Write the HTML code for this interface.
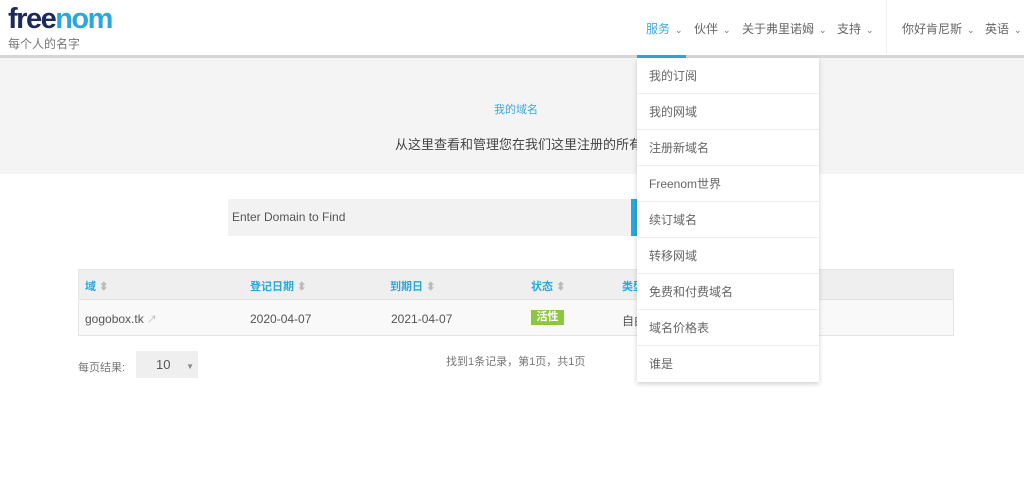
<!DOCTYPE html>
<html><head><meta charset="utf-8"><style>
*{margin:0;padding:0;box-sizing:border-box}
body{width:1024px;height:492px;background:#fff;font-family:"Liberation Sans","Noto Sans CJK SC",sans-serif;position:relative;overflow:hidden;color:#555}
.a{position:absolute}
.nav{font-size:12px;color:#666;top:20px}
.car{font-size:9px;color:#777;margin-left:5px}
.dd div{height:36px;line-height:36px;padding-left:12px;font-size:12px;color:#666;border-bottom:1px solid #eee}
th,td{text-align:left}
</style></head><body>
<div class="a" style="left:8px;top:4px;font-size:29px;font-weight:bold;letter-spacing:-1.5px;line-height:30px"><span style="color:#1e2a5a">free</span><span style="color:#29a8e0">nom</span></div>
<div class="a" style="left:8px;top:35px;font-size:12px;color:#777">每个人的名字</div>
<div class="a nav" style="left:646px;color:#3aa8dc">服务<span class="car">⌄</span></div>
<div class="a nav" style="left:694px">伙伴<span class="car">⌄</span></div>
<div class="a nav" style="left:742px">关于弗里诺姆<span class="car">⌄</span></div>
<div class="a nav" style="left:837px">支持<span class="car">⌄</span></div>
<div class="a" style="left:886px;top:0;width:1px;height:55px;background:#eee"></div>
<div class="a nav" style="left:902px">你好肯尼斯<span class="car">⌄</span></div>
<div class="a nav" style="left:985px">英语<span class="car">⌄</span></div>
<div class="a" style="left:0;top:55px;width:1024px;height:3px;background:#d6d6d6"></div>
<div class="a" style="left:637px;top:55px;width:49px;height:3px;background:#29a8e0"></div>
<div class="a" style="left:0;top:58px;width:1024px;height:116px;background:#f4f4f4"></div>
<div class="a" style="left:494px;top:101px;font-size:11px;color:#3aa8dc">我的域名</div>
<div class="a" style="left:395px;top:134px;font-size:13px;color:#444">从这里查看和管理您在我们这里注册的所有域名...</div>
<div class="a" style="left:228px;top:199px;width:404px;height:37px;background:#f2f2f2;font-size:12px;color:#555;line-height:37px;padding-left:4px">Enter Domain to Find</div>
<div class="a" style="left:631px;top:199px;width:6px;height:37px;background:#29a8e0"></div>
<div class="a" style="left:78px;top:269px;width:876px;height:67px;border:1px solid #e5e5e5;background:#f9f9f9"></div>
<div class="a" style="left:79px;top:270px;width:874px;height:30px;background:#efefef;border-bottom:1px solid #e3e3e3"></div>
<div class="a" style="top:278px;left:85px;font-size:11px;font-weight:bold;color:#29a8e0">域 <span style="color:#bbb">⬍</span></div>
<div class="a" style="top:278px;left:250px;font-size:11px;font-weight:bold;color:#29a8e0">登记日期 <span style="color:#bbb">⬍</span></div>
<div class="a" style="top:278px;left:390px;font-size:11px;font-weight:bold;color:#29a8e0">到期日 <span style="color:#bbb">⬍</span></div>
<div class="a" style="top:278px;left:531px;font-size:11px;font-weight:bold;color:#29a8e0">状态 <span style="color:#bbb">⬍</span></div>
<div class="a" style="top:278px;left:622px;font-size:11px;font-weight:bold;color:#29a8e0">类型</div>
<div class="a" style="top:311px;left:85px;font-size:12px;color:#555">gogobox.tk <span style="color:#bbb;font-size:10px">↗</span></div>
<div class="a" style="top:312px;left:250px;font-size:12px;color:#555">2020-04-07</div>
<div class="a" style="top:312px;left:391px;font-size:12px;color:#555">2021-04-07</div>
<div class="a" style="top:310px;left:531px;width:33px;height:15px;background:#8dc63f;color:#fff;font-size:11px;font-weight:bold;text-align:center;line-height:15px">活性</div>
<div class="a" style="top:312px;left:622px;font-size:12px;color:#555">自由</div>
<div class="a" style="top:359px;left:78px;font-size:11px;color:#777">每页结果:</div>
<div class="a" style="top:351px;left:136px;width:62px;height:27px;background:#efefef;font-size:13px;color:#555;line-height:27px;padding-left:20px">10 <span style="font-size:8px;color:#888;margin-left:12px">▼</span></div>
<div class="a" style="top:353px;left:446px;font-size:11px;color:#777">找到1条记录，第1页，共1页</div>
<div class="a dd" style="left:637px;top:58px;width:182px;height:324px;background:#fff;box-shadow:0 2px 5px rgba(0,0,0,.18)">
<div>我的订阅</div><div>我的网域</div><div>注册新域名</div><div>Freenom世界</div><div>续订域名</div><div>转移网域</div><div>免费和付费域名</div><div>域名价格表</div><div style="border:0">谁是</div>
</div>
</body></html>
